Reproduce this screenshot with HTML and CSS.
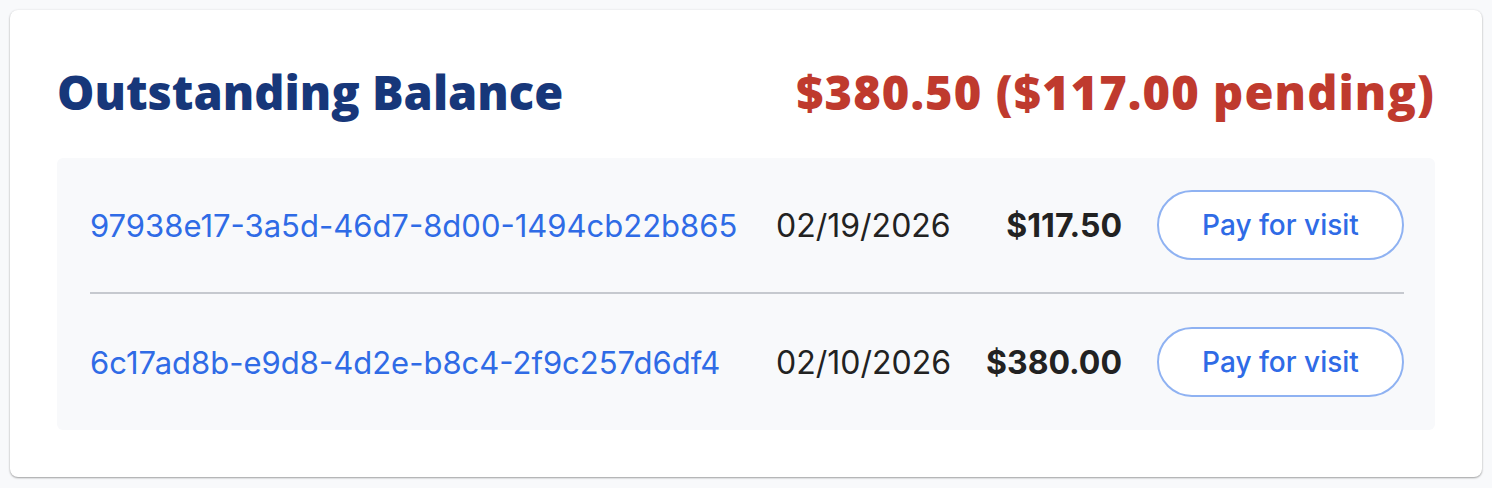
FILE: index.html
```html
<!DOCTYPE html>
<html lang="en">
<head>
    <meta charset="UTF-8">
    <meta name="viewport" content="width=device-width, initial-scale=1.0">
    <title>Outstanding Balance</title>
    <link rel="stylesheet" href="styles.css">
</head>
<body>
    <div class="balance-card">
        <div class="balance-header">
            <h2>Outstanding Balance</h2>
            <div class="balance-total">$380.50 ($117.00 pending)</div>
        </div>

        <div class="visit-list">
            <div class="visit-row">
                <a href="#" class="visit-id">97938e17-3a5d-46d7-8d00-1494cb22b865</a>
                <span class="visit-date">02/19/2026</span>
                <span class="visit-amount">$117.50</span>
                <button class="pay-btn">Pay for visit</button>
            </div>
            <div class="visit-row">
                <a href="#" class="visit-id">6c17ad8b-e9d8-4d2e-b8c4-2f9c257d6df4</a>
                <span class="visit-date">02/10/2026</span>
                <span class="visit-amount">$380.00</span>
                <button class="pay-btn">Pay for visit</button>
            </div>
        </div>
    </div>
</body>
</html>
```

FILE: styles.css
```css
body {
    margin: 0;
    padding: 10px;
    background: #f8f9fb;
    font-family: Inter, "Noto Sans", sans-serif;
}
.balance-card {
    background: white;
    border-radius: 8px;
    padding: 47px;
    box-shadow: 0 1px 2px rgba(0,0,0,0.35), 0 0 3px rgba(0,0,0,0.06);
}
.balance-header {
    display: flex;
    justify-content: space-between;
    align-items: center;
    height: 70px;
    margin-bottom: 31px;
}
.balance-header h2 {
    margin: 0;
    font-family: "Open Sans", sans-serif;
    font-size: 47px;
    font-weight: 800;
    color: #17377a;
}
.balance-total {
    font-family: "Open Sans", sans-serif;
    font-size: 47px;
    font-weight: 800;
    letter-spacing: 1.1px;
    color: #bf3a2e;
}
.visit-list {
    display: grid;
    grid-template-columns: 1fr auto auto auto;
    column-gap: 35px;
    background: #f8f9fb;
    border-radius: 6px;
    padding: 0 31px 0 33px;
}
.visit-row {
    grid-column: 1 / -1;
    display: grid;
    grid-template-columns: subgrid;
    align-items: center;
    padding: 32px 0;
}
.visit-row + .visit-row {
    border-top: 2px solid #c6c9cf;
    padding-top: 33px;
    padding-bottom: 33px;
}
.visit-id {
    color: #2f6be6;
    text-decoration: none;
    font-size: 31px;
}
.visit-date {
    color: #222;
    font-size: 32px;
}
.visit-amount {
    color: #222;
    font-size: 32px;
    font-weight: 700;
    text-align: right;
}
.pay-btn {
    width: 247px;
    height: 70px;
    background: white;
    border: 2px solid #8fb2f2;
    border-radius: 35px;
    color: #2f6be6;
    font-family: Inter, sans-serif;
    font-size: 28px;
    font-weight: 500;
    cursor: pointer;
}
```
